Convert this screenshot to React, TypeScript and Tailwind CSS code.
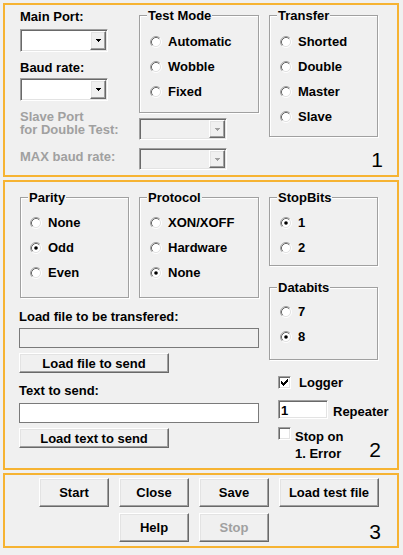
import type { ReactNode } from "react";

const sunken =
  "border border-t-[#a0a0a0] border-l-[#a0a0a0] border-b-white border-r-white shadow-[inset_1px_1px_0_#696969,inset_-1px_-1px_0_#e3e3e3]";
const raised =
  "border border-t-white border-l-white border-b-[#696969] border-r-[#696969] shadow-[inset_-1px_-1px_0_#a0a0a0,inset_1px_1px_0_#e3e3e3]";
const panel = "ml-[3px] w-[396px] border-2 border-[#f6b332]";

function RadioDot({ checked = false }: { checked?: boolean }) {
  return (
    <svg width="12" height="12" viewBox="0 0 12 12" className="shrink-0">
      <circle cx="6" cy="6" r="4.5" fill="#fff" />
      <path d="M2.11 9.89A5.5 5.5 0 0 1 9.89 2.11" fill="none" stroke="#a0a0a0" />
      <path d="M9.89 2.11A5.5 5.5 0 0 1 2.11 9.89" fill="none" stroke="#fff" />
      <path d="M2.82 9.18A4.5 4.5 0 0 1 9.18 2.82" fill="none" stroke="#696969" />
      <path d="M9.18 2.82A4.5 4.5 0 0 1 2.82 9.18" fill="none" stroke="#e3e3e3" />
      {checked && <circle cx="6" cy="6" r="1.8" fill="#000" />}
    </svg>
  );
}

function Radio({ label, checked }: { label: string; checked?: boolean }) {
  return (
    <div className="flex h-[15px] items-center gap-[6px]">
      <RadioDot checked={checked} />
      <span className="leading-[15px]">{label}</span>
    </div>
  );
}

function Check({ checked = false }: { checked?: boolean }) {
  return (
    <span className={`flex h-[13px] w-[13px] shrink-0 items-center justify-center bg-white ${sunken}`}>
      {checked && (
        <svg width="7" height="7" viewBox="0 0 7 7" shapeRendering="crispEdges">
          <path d="M6 0h1v3h-1v1h-1v1h-1v1h-1v1h-1v-1h-1v-1h-1v-3h1v1h1v1h1v-1h1v-1h1z" fill="#000" />
        </svg>
      )}
    </span>
  );
}

function Arrow({ color }: { color: string }) {
  return (
    <svg width="5" height="3" viewBox="0 0 5 3" shapeRendering="crispEdges">
      <rect x="0" y="0" width="5" height="1" fill={color} />
      <rect x="1" y="1" width="3" height="1" fill={color} />
      <rect x="2" y="2" width="1" height="1" fill={color} />
    </svg>
  );
}

function Combo({ disabled = false, className = "" }: { disabled?: boolean; className?: string }) {
  return (
    <div
      className={`flex w-[88px] justify-end p-[1px] ${sunken} ${
        disabled ? "bg-[#f0f0f0]" : "bg-white"
      } ${className}`}
    >
      <div className={`flex h-full w-[16px] items-center justify-center bg-[#f0f0f0] ${raised}`}>
        <Arrow color={disabled ? "#a0a0a0" : "#000"} />
      </div>
    </div>
  );
}

function Group({
  title,
  className = "",
  children,
}: {
  title: string;
  className?: string;
  children: ReactNode;
}) {
  return (
    <div
      className={`relative flex flex-col gap-[10px] border border-[#a0a0a0] shadow-[inset_1px_1px_0_#fff,1px_1px_0_#fff] ${className}`}
    >
      <span className="absolute left-[7px] top-[-8px] bg-[#f0f0f0] px-[1px] leading-[15px]">
        {title}
      </span>
      {children}
    </div>
  );
}

function Btn({
  children,
  className = "",
  disabled = false,
}: {
  children: ReactNode;
  className?: string;
  disabled?: boolean;
}) {
  return (
    <button
      type="button"
      className={`flex shrink-0 items-center justify-center bg-[#f0f0f0] font-bold leading-[15px] ${raised} ${
        disabled ? "text-[#a0a0a0]" : "text-black"
      } ${className}`}
    >
      {children}
    </button>
  );
}

export default function App() {
  return (
    <div className="h-[555px] w-[403px] overflow-hidden bg-[#f0f0f0] pt-[3px] font-['Liberation_Sans',Arial,sans-serif] text-[13px] font-bold text-black">
      {/* 1 */}
      <div className={`${panel} flex h-[174px]`}>
        <div className="flex w-[134px] flex-col pl-[15px]">
          <div className="mt-[4px] leading-[15px]">Main Port:</div>
          <Combo className="mt-[5px] h-[23px]" />
          <div className="mt-[8px] leading-[15px]">Baud rate:</div>
          <Combo className="mt-[3px] h-[23px]" />
          <div className="mt-[9px] leading-[13px] text-[#a0a0a0]">
            Slave Port
            <br />
            for Double Test:
          </div>
          <div className="mt-[13px] leading-[15px] text-[#a0a0a0]">MAX baud rate:</div>
        </div>

        <div className="flex w-[130px] flex-col">
          <Group title="Test Mode" className="mt-[10px] h-[98px] w-[120px] pl-[10px] pt-[18px]">
            <Radio label="Automatic" />
            <Radio label="Wobble" />
            <Radio label="Fixed" />
          </Group>
          <Combo disabled className="mt-[5px] h-[22px]" />
          <Combo disabled className="mt-[8px] h-[22px]" />
        </div>

        <div className="flex flex-1 flex-col">
          <Group title="Transfer" className="mt-[10px] h-[122px] w-[109px] pl-[10px] pt-[18px]">
            <Radio label="Shorted" />
            <Radio label="Double" />
            <Radio label="Master" />
            <Radio label="Slave" />
          </Group>
          <div className="mr-[14px] mt-[12px] self-end text-[21px] font-normal leading-[21px]">1</div>
        </div>
      </div>

      {/* 2 */}
      <div className={`${panel} mt-[3px] flex h-[290px]`}>
        <div className="flex w-[264px] flex-col pl-[14px]">
          <div className="ml-[1px] mt-[15px] flex gap-[10px]">
            <Group title="Parity" className="h-[101px] w-[109px] pl-[9px] pt-[17px]">
              <Radio label="None" />
              <Radio label="Odd" checked />
              <Radio label="Even" />
            </Group>
            <Group title="Protocol" className="h-[101px] w-[120px] pl-[10px] pt-[17px]">
              <Radio label="XON/XOFF" />
              <Radio label="Hardware" />
              <Radio label="None" checked />
            </Group>
          </div>
          <div className="mt-[11px] leading-[15px]">Load file to be transfered:</div>
          <div className="mt-[4px] h-[20px] w-[240px] border border-[#7a7a7a] bg-[#f0f0f0]" />
          <Btn className="mt-[5px] h-[20px] w-[150px]">Load file to send</Btn>
          <div className="mt-[10px] leading-[15px]">Text to send:</div>
          <div className="mt-[5px] h-[20px] w-[240px] border border-[#7a7a7a] bg-white" />
          <Btn className="mt-[5px] h-[20px] w-[150px]">Load text to send</Btn>
        </div>

        <div className="flex flex-1 flex-col">
          <Group title="StopBits" className="mt-[15px] h-[69px] w-[109px] pl-[10px] pt-[17px]">
            <Radio label="1" checked />
            <Radio label="2" />
          </Group>
          <Group title="Databits" className="mt-[21px] h-[73px] w-[109px] pl-[10px] pt-[16px]">
            <Radio label="7" />
            <Radio label="8" checked />
          </Group>
          <div className="ml-[9px] flex flex-col">
            <div className="mt-[16px] flex h-[13px] items-center gap-[8px]">
              <Check checked />
              <span className="leading-[15px]">Logger</span>
            </div>
            <div className="mt-[11px] flex items-end">
              <div className={`h-[19px] w-[50px] bg-white pl-[2px] pt-[3px] leading-[14px] ${sunken}`}>1</div>
              <span className="ml-[5px] leading-[15px]">Repeater</span>
            </div>
            <div className="mt-[8px] flex items-start">
              <Check />
              <span className="ml-[4px] mt-[1px] leading-[17px]">
                Stop on
                <br />
                1. Error
              </span>
              <span className="ml-auto mr-[16px] mt-[12px] text-[21px] font-normal leading-[21px]">2</span>
            </div>
          </div>
        </div>
      </div>

      {/* 3 */}
      <div className={`${panel} mt-[3px] flex h-[75px] flex-col gap-[6px] pl-[34px] pt-[3px]`}>
        <div className="flex gap-[10px]">
          <Btn className="h-[29px] w-[70px]">Start</Btn>
          <Btn className="h-[29px] w-[70px]">Close</Btn>
          <Btn className="h-[29px] w-[70px]">Save</Btn>
          <Btn className="h-[29px] w-[100px]">Load test file</Btn>
        </div>
        <div className="flex gap-[10px] pl-[80px]">
          <Btn className="h-[29px] w-[70px]">Help</Btn>
          <Btn className="h-[29px] w-[70px]" disabled>
            Stop
          </Btn>
          <span className="ml-auto mr-[16px] mt-[8px] text-[21px] font-normal leading-[21px]">3</span>
        </div>
      </div>
    </div>
  );
}
